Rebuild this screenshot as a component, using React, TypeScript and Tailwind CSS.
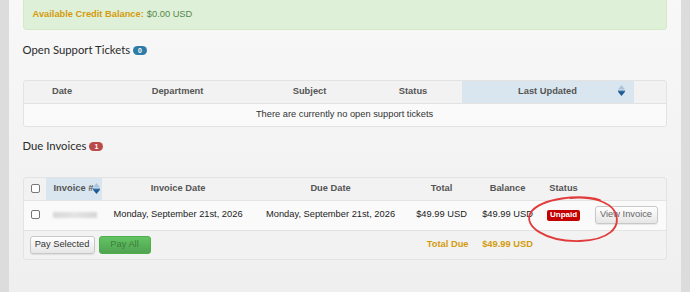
import React from "react"

const sans = { fontFamily: '"Liberation Sans", Arial, sans-serif' }

function SortIcon() {
  return (
    <svg width="7" height="11" viewBox="0 0 7 11" className="inline-block">
      <polygon points="3.5,0 7,4.5 0,4.5" fill="#a9c3d9" />
      <rect x="0" y="5.6" width="7" height="1.2" fill="#1d5a97" />
      <polygon points="0,6.8 7,6.8 3.5,11" fill="#1d5a97" />
    </svg>
  )
}

function Checkbox() {
  return <span className="inline-block h-[9px] w-[9px] rounded-[2px] border border-[#777] bg-white align-middle" />
}

function Badge({ n, color }: { n: string; color: string }) {
  return (
    <span
      className={`ml-[3px] inline-flex h-[9px] items-center rounded-full px-[5px] text-[7px] font-bold leading-none text-white ${color}`}
      style={sans}
    >
      {n}
    </span>
  )
}

function GreyButton({ children, className = "" }: { children: React.ReactNode; className?: string }) {
  return (
    <button
      className={`h-[18px] rounded-[3px] border border-[#c8c8c8] bg-gradient-to-b from-white to-[#e6e6e6] text-[9.3px] shadow-[0_1px_1px_rgba(0,0,0,0.08)] ${className}`}
      style={sans}
    >
      {children}
    </button>
  )
}

function Heading({ title, badge }: { title: string; badge: React.ReactNode }) {
  return (
    <div
      className="flex h-[14px] items-end text-[11.3px] font-normal leading-[14px] text-[#2a2a2a]"
      style={{ fontFamily: 'Lato, "Open Sans", sans-serif' }}
    >
      <span>{title}</span>
      <span className="mb-[1px]">{badge}</span>
    </div>
  )
}

export default function App() {
  const th = "h-[22px] border-b border-[#e3e3e3] text-[9.3px] font-bold text-[#555]"

  return (
    <div className="relative flex h-[292px] w-[690px] overflow-hidden bg-[#dcdcdc]" style={sans}>
      <div className="w-[9px]" />

      <div className="flex-1 bg-gradient-to-b from-[#f8f8f8] to-[#efefef] px-[14px]">
        <div className="flex h-[30px] items-center rounded-b-[4px] border border-t-0 border-[#d6e9c6] bg-[#dff0d8] pl-[9px] pt-[1px] text-[9.3px]">
          <span className="font-bold text-[#d49b0c]">Available Credit Balance:</span>
          <span className="ml-[3px] text-[#55884a]">$0.00 USD</span>
        </div>

        <div className="mt-[13px]">
          <Heading title="Open Support Tickets" badge={<Badge n="0" color="bg-[#2f7ba8]" />} />
        </div>

        <div className="mt-[23px] overflow-hidden rounded-[3px] border border-[#e3e3e3] bg-[#f2f2f2]">
          <table className="w-full table-fixed border-collapse">
            <colgroup>
              <col className="w-[77px]" />
              <col className="w-[154px]" />
              <col className="w-[110px]" />
              <col className="w-[97px]" />
              <col className="w-[172px]" />
              <col className="w-[32px]" />
            </colgroup>
            <thead>
              <tr>
                <th className={th}>Date</th>
                <th className={th}>Department</th>
                <th className={th}>Subject</th>
                <th className={th}>Status</th>
                <th className={`${th} bg-[#d9e6ef]`}>
                  <div className="relative flex items-center justify-center">
                    <span>Last Updated</span>
                    <span className="absolute right-[9px] top-[-1px]">
                      <SortIcon />
                    </span>
                  </div>
                </th>
                <th className={th} />
              </tr>
            </thead>
            <tbody>
              <tr className="h-[23px] bg-[#fafafa]">
                <td colSpan={6} className="text-center text-[9.3px] text-[#333]">
                  There are currently no open support tickets
                </td>
              </tr>
            </tbody>
          </table>
        </div>

        <div className="mt-[12px]">
          <Heading title="Due Invoices" badge={<Badge n="1" color="bg-[#b94a48]" />} />
        </div>

        <div className="mt-[24px] overflow-hidden rounded-[3px] border border-[#e3e3e3] bg-[#f2f2f2]">
          <table className="w-full table-fixed border-collapse">
            <colgroup>
              <col className="w-[22px]" />
              <col className="w-[56px]" />
              <col className="w-[153px]" />
              <col className="w-[152px]" />
              <col className="w-[70px]" />
              <col className="w-[62px]" />
              <col className="w-[50px]" />
              <col className="w-[77px]" />
            </colgroup>
            <thead>
              <tr>
                <th className={`${th} pl-[2px]`}>
                  <Checkbox />
                </th>
                <th className={`${th} bg-[#d9e6ef] pl-[8px] text-left`}>
                  <span className="inline-flex items-center">
                    Invoice #
                    <SortIcon />
                  </span>
                </th>
                <th className={th}>Invoice Date</th>
                <th className={th}>Due Date</th>
                <th className={th}>Total</th>
                <th className={th}>Balance</th>
                <th className={th}>Status</th>
                <th className={th} />
              </tr>
            </thead>
            <tbody>
              <tr className="h-[30px] border-b border-[#e3e3e3] bg-[#fafafa] text-[9.3px] text-[#222]">
                <td className="pl-[2px] text-center">
                  <Checkbox />
                </td>
                <td className="pl-[7px]">
                  <div className="h-[6px] w-[44px] bg-gradient-to-r from-[#d8d8d8] via-[#e4e4e4] to-[#d6d6d6] blur-[1px]" />
                </td>
                <td className="text-center">Monday, September 21st, 2026</td>
                <td className="text-center">Monday, September 21st, 2026</td>
                <td className="text-center">$49.99 USD</td>
                <td className="text-center">$49.99 USD</td>
                <td className="text-center">
                  <span className="inline-flex h-[11px] items-center rounded-[2px] bg-[#c40000] px-[3px] text-[8px] font-bold text-white">
                    Unpaid
                  </span>
                </td>
                <td className="pl-[6px]">
                  <GreyButton className="w-[63px] text-[#666]">View Invoice</GreyButton>
                </td>
              </tr>
            </tbody>
            <tfoot>
              <tr className="h-[29px] text-[9.3px]">
                <td colSpan={4} className="pl-[6px]">
                  <div className="flex gap-[4px]">
                    <GreyButton className="w-[65px] text-[#333]">Pay Selected</GreyButton>
                    <button
                      className="h-[18px] w-[52px] rounded-[3px] border border-[#4cae4c] bg-gradient-to-b from-[#62c462] to-[#51a351] text-[9.3px] text-[#3d7d3d]"
                      style={sans}
                    >
                      Pay All
                    </button>
                  </div>
                </td>
                <td className="pr-[8px] text-right font-bold text-[#d49b0c]">Total Due</td>
                <td className="text-center font-bold text-[#d49b0c]">$49.99 USD</td>
                <td colSpan={2} />
              </tr>
            </tfoot>
          </table>
        </div>
      </div>

      <div className="w-[10px]" />

      <svg className="pointer-events-none absolute left-0 top-0" width="690" height="292" viewBox="0 0 690 292">
        <path
          d="M600 200 C 580 194, 542 198, 531 212 C 522 226, 546 242, 580 241 C 608 240, 622 228, 615 212 C 610 202, 592 196, 570 198"
          fill="none"
          stroke="#e23b3b"
          strokeWidth="1.8"
          strokeLinecap="round"
        />
      </svg>
    </div>
  )
}
